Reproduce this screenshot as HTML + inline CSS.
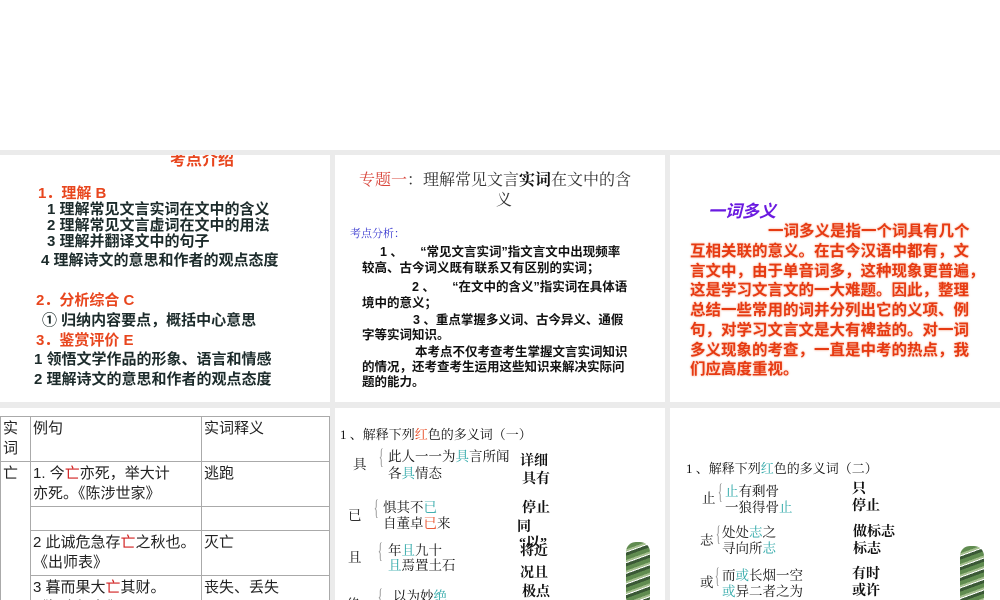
<!DOCTYPE html>
<html><head><meta charset="utf-8"><style>
*{margin:0;padding:0;box-sizing:border-box}
body{width:1000px;height:600px;overflow:hidden;background:#fff;position:relative;font-family:"Liberation Sans","Noto Sans CJK SC",sans-serif}
.bg{position:absolute;left:0;top:150px;width:1000px;height:450px;background:#ebebeb}
.s{position:absolute;background:#fff;overflow:hidden}
.t{position:absolute;white-space:nowrap}
.r{color:#e8461e}
.b1{font-weight:bold;font-size:15px;color:#1c2b2b}
.p{font-weight:bold;font-size:12.5px;color:#111}
.o{font-weight:bold;font-size:15.5px;color:#e63a12;text-shadow:0 0 2px #f7a080}
.n{font-size:13.5px;color:#111;font-family:"Liberation Serif","Noto Serif CJK SC",serif}
.a{font-size:14px;font-weight:bold;color:#111;font-family:"Liberation Serif","Noto Serif CJK SC",serif}
.br{position:absolute;font-size:22px;color:#888;transform:scaleX(.45);font-family:"Liberation Serif",serif}
.c{color:#2aa6a6}
.rd{color:#e8461e}
table{border-collapse:collapse;font-size:15px;color:#222}
td{border:1px solid #aaa;vertical-align:top;padding:2px 2px;line-height:20px}
.bam{position:absolute;width:24px;background:repeating-linear-gradient(160deg,#24461f 0 3px,#4f7f3c 3px 7px,#9ab882 7px 9px,#ffffff 9px 10px);border-radius:10px 10px 4px 4px;opacity:.9}
</style></head><body>
<div class="bg"></div>

<!-- slide 1 -->
<div class="s" style="left:0;top:155px;width:330px;height:247px">
<div class="t r" style="left:170px;top:-9px;font-size:16px;font-weight:bold">考点介绍</div>
<div class="t r" style="left:38px;top:27px;font-size:15px;font-weight:bold">1．理解 B</div>
<div class="t b1" style="left:47px;top:43px">1 理解常见文言实词在文中的含义</div>
<div class="t b1" style="left:47px;top:59px">2 理解常见文言虚词在文中的用法</div>
<div class="t b1" style="left:47px;top:75px">3 理解并翻译文中的句子</div>
<div class="t b1" style="left:41px;top:94px">4 理解诗文的意思和作者的观点态度</div>
<div class="t r" style="left:36px;top:134px;font-size:15px;font-weight:bold">2．分析综合 C</div>
<div class="t b1" style="left:42px;top:154px">① 归纳内容要点，概括中心意思</div>
<div class="t r" style="left:36px;top:174px;font-size:15px;font-weight:bold">3．鉴赏评价 E</div>
<div class="t b1" style="left:34px;top:193px">1 领悟文学作品的形象、语言和情感</div>
<div class="t b1" style="left:34px;top:213px">2 理解诗文的意思和作者的观点态度</div>
</div>

<!-- slide 2 -->
<div class="s" style="left:335px;top:155px;width:330px;height:247px">
<div class="t" style="left:24px;top:12px;font-size:16px;font-family:'Liberation Serif','Noto Serif CJK SC',serif;color:#333"><span style="color:#d8443a">专题一</span>：理解常见文言<b style="color:#111">实词</b>在文中的含</div>
<div class="t" style="left:161px;top:32px;font-size:16px;font-family:'Liberation Serif','Noto Serif CJK SC',serif;color:#333">义</div>
<div class="t" style="left:15px;top:70px;font-size:11px;color:#3a3ad0;font-family:'Liberation Serif','Noto Serif CJK SC',serif">考点分析：</div>
<div class="t p" style="left:45px;top:86px">1 、&nbsp;&nbsp;&nbsp;&nbsp; “常见文言实词”指文言文中出现频率</div>
<div class="t p" style="left:27px;top:102px">较高、古今词义既有联系又有区别的实词；</div>
<div class="t p" style="left:77px;top:121px">2 、&nbsp;&nbsp;&nbsp;&nbsp; “在文中的含义”指实词在具体语</div>
<div class="t p" style="left:27px;top:137px">境中的意义；</div>
<div class="t p" style="left:78px;top:154px">3 、重点掌握多义词、古今异义、通假</div>
<div class="t p" style="left:27px;top:169px">字等实词知识。</div>
<div class="t p" style="left:80px;top:186px">本考点不仅考查考生掌握文言实词知识</div>
<div class="t p" style="left:27px;top:201px">的情况，还考查考生运用这些知识来解决实际问</div>
<div class="t p" style="left:27px;top:216px">题的能力。</div>
</div>

<!-- slide 3 -->
<div class="s" style="left:670px;top:155px;width:330px;height:247px">
<div class="t" style="left:38px;top:42px;font-size:17px;font-weight:bold;font-style:italic;color:#6a1ae0">一词多义</div>
<div class="t o" style="left:98px;top:64px">一词多义是指一个词具有几个</div>
<div class="t o" style="left:20px;top:84px">互相关联的意义。在古今汉语中都有，文</div>
<div class="t o" style="left:20px;top:104px">言文中，由于单音词多，这种现象更普遍，</div>
<div class="t o" style="left:20px;top:123px">这是学习文言文的一大难题。因此，整理</div>
<div class="t o" style="left:20px;top:143px">总结一些常用的词并分列出它的义项、例</div>
<div class="t o" style="left:20px;top:163px">句，对学习文言文是大有裨益的。对一词</div>
<div class="t o" style="left:20px;top:183px">多义现象的考查，一直是中考的热点，我</div>
<div class="t o" style="left:20px;top:202px">们应高度重视。</div>
</div>

<!-- slide 4 table -->
<div class="s" style="left:0;top:408px;width:330px;height:192px">
<table style="position:absolute;left:0;top:8px;width:330px">
<tr style="height:43px"><td style="width:30px">实<br>词</td><td style="width:171px">例句</td><td>实词释义</td></tr>
<tr style="height:44px"><td rowspan="4">亡</td><td>1. 今<span style="color:#d02020">亡</span>亦死，举大计<br>亦死。《陈涉世家》</td><td>逃跑</td></tr>
<tr style="height:24px"><td></td><td></td></tr>
<tr style="height:42px"><td>2 此诚危急存<span style="color:#d02020">亡</span>之秋也。<br>《出师表》</td><td>灭亡</td></tr>
<tr style="height:44px"><td>3 暮而果大<span style="color:#d02020">亡</span>其财。<br>《智者疑邻》</td><td>丧失、丢失</td></tr>
</table>
</div>

<!-- slide 5 -->
<div class="s" style="left:335px;top:408px;width:330px;height:192px">
<div class="t n" style="left:5px;top:16px;font-size:13px">1 、解释下列<span class="rd">红</span>色的多义词（一）</div>
<div class="t n" style="left:18px;top:45px">具</div>
<div class="br" style="left:41px;top:36px">{</div>
<div class="t n" style="left:53px;top:37px">此人一一为<span class="c">具</span>言所闻</div>
<div class="t n" style="left:53px;top:54px">各<span class="c">具</span>情态</div>
<div class="t a" style="left:185px;top:42px">详细</div>
<div class="t a" style="left:187px;top:60px">具有</div>
<div class="t n" style="left:13px;top:96px">已</div>
<div class="br" style="left:36px;top:87px">{</div>
<div class="t n" style="left:48px;top:88px">惧其不<span class="c">已</span></div>
<div class="t n" style="left:48px;top:104px">自董卓<span class="rd">已</span>来</div>
<div class="t a" style="left:187px;top:89px">停止</div>
<div class="t a" style="left:182px;top:108px">同</div>
<div class="t a" style="left:184px;top:124px">“以”</div>
<div class="t a" style="left:185px;top:132px">将近</div>
<div class="t n" style="left:13px;top:138px">且</div>
<div class="br" style="left:40px;top:130px">{</div>
<div class="t n" style="left:53px;top:131px">年<span class="c">且</span>九十</div>
<div class="t n" style="left:53px;top:146px"><span class="c">且</span>焉置土石</div>
<div class="t a" style="left:185px;top:154px">况且</div>
<div class="t a" style="left:187px;top:173px">极点</div>
<div class="t n" style="left:12px;top:185px">绝</div>
<div class="br" style="left:40px;top:176px">{</div>
<div class="t n" style="left:58px;top:177px">以为妙<span class="c">绝</span></div>
<div class="bam" style="left:291px;top:134px;height:60px"></div>
</div>

<!-- slide 6 -->
<div class="s" style="left:670px;top:408px;width:330px;height:192px">
<div class="t n" style="left:16px;top:50px;font-size:13px">1 、解释下列<span class="c">红</span>色的多义词（二）</div>
<div class="t n" style="left:32px;top:79px">止</div>
<div class="br" style="left:45px;top:71px">{</div>
<div class="t n" style="left:55px;top:72px"><span class="c">止</span>有剩骨</div>
<div class="t n" style="left:55px;top:88px">一狼得骨<span class="c">止</span></div>
<div class="t a" style="left:182px;top:70px">只</div>
<div class="t a" style="left:182px;top:87px">停止</div>
<div class="t n" style="left:30px;top:121px">志</div>
<div class="br" style="left:43px;top:113px">{</div>
<div class="t n" style="left:52px;top:113px">处处<span class="c">志</span>之</div>
<div class="t n" style="left:52px;top:129px">寻向所<span class="c">志</span></div>
<div class="t a" style="left:183px;top:113px">做标志</div>
<div class="t a" style="left:183px;top:130px">标志</div>
<div class="t n" style="left:30px;top:163px">或</div>
<div class="br" style="left:42px;top:155px">{</div>
<div class="t n" style="left:52px;top:156px">而<span class="c">或</span>长烟一空</div>
<div class="t n" style="left:52px;top:172px"><span class="c">或</span>异二者之为</div>
<div class="t a" style="left:182px;top:155px">有时</div>
<div class="t a" style="left:182px;top:172px">或许</div>
<div class="bam" style="left:290px;top:138px;height:56px"></div>
</div>
</body></html>
